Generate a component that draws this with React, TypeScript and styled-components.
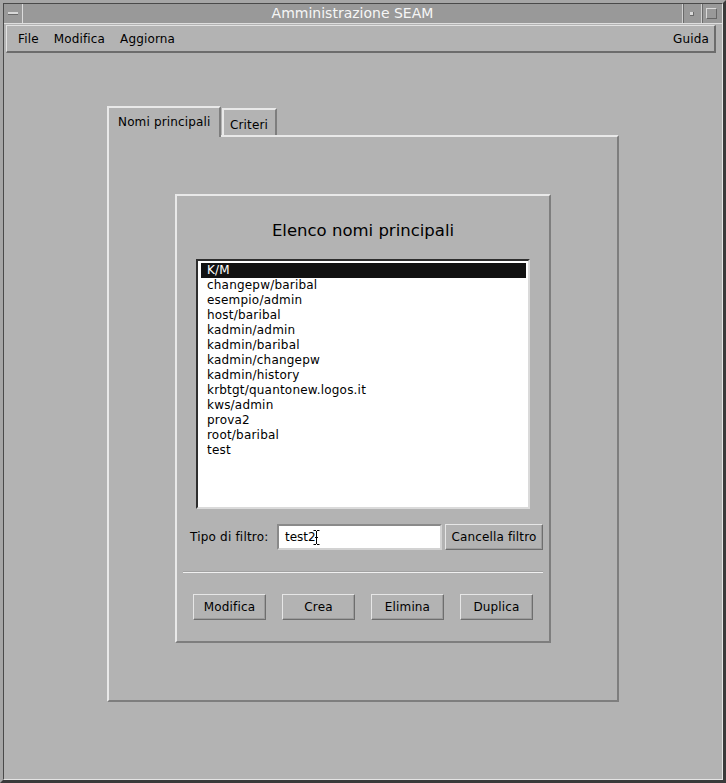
import React from "react";
import styled, { createGlobalStyle } from "styled-components";

const BG = "#b3b3b3";
const LIGHT = "#e9e9e9";
const DARK = "#7e7e7e";

const GlobalStyle = createGlobalStyle`
  html, body { margin: 0; padding: 0; background: ${BG}; }
  body {
    font-family: "DejaVu Sans", "Liberation Sans", sans-serif;
    font-size: 12px;
    color: #000;
  }
  #root { width: 726px; height: 783px; overflow: hidden; }
`;

const Window = styled.div`
  box-sizing: border-box;
  width: 726px;
  height: 783px;
  background: ${BG};
  border-style: solid;
  border-width: 3px;
  border-color: #a6a6a6 #3a3a3a #3a3a3a #a6a6a6;
  display: flex;
`;

const Frame = styled.div`
  flex: 1;
  min-width: 0;
  display: flex;
  flex-direction: column;
  border-style: solid;
  border-width: 1px;
  border-color: #4a4a4a #e4e4e4 #e4e4e4 #4a4a4a;
`;

const TitleBar = styled.div`
  height: 19px;
  display: flex;
  background: #999999;
  border-bottom: 1px solid #dedede;
`;

const WinButton = styled.div<{ $edge: "left" | "right" }>`
  width: 18px;
  display: flex;
  align-items: center;
  justify-content: center;
  ${(p) =>
    p.$edge === "left"
      ? `border-right: 1px solid #dcdcdc;`
      : `border-left: 1px solid #d0d0d0; box-shadow: inset 1px 0 0 #6a6a6a;`}
`;

const MinBar = styled.div`
  width: 10px;
  height: 2px;
  background: #d8d8d8;
  border-bottom: 1px solid #6a6a6a;
`;

const Dot = styled.div`
  width: 3px;
  height: 3px;
  background: #dadada;
  border-right: 1px solid #6a6a6a;
  border-bottom: 1px solid #6a6a6a;
`;

const MaxBox = styled.div`
  box-sizing: border-box;
  width: 11px;
  height: 11px;
  border-style: solid;
  border-width: 1px;
  border-color: #dadada #666 #666 #dadada;
`;

const Spacer = styled.div`
  width: 2px;
`;

const Title = styled.div`
  flex: 1;
  text-align: center;
  color: #f6f6f6;
  font-size: 14px;
  line-height: 19px;
`;

const Client = styled.div`
  flex: 1;
  display: flex;
  flex-direction: column;
`;

const MenuBar = styled.div`
  box-sizing: border-box;
  height: 28px;
  margin: 1px 6px 0 2px;
  display: flex;
  align-items: center;
  gap: 15px;
  padding: 0 5px 0 11px;
  border-style: solid;
  border-width: 1px 2px 2px 1px;
  border-color: #e2e2e2 #6c6c6c #6c6c6c #e2e2e2;
`;

const MenuItem = styled.span<{ $right?: boolean }>`
  font-size: 12px;
  letter-spacing: 0.15px;
  ${(p) => (p.$right ? "margin-left: auto;" : "")}
`;

const Main = styled.div`
  flex: 1;
  display: flex;
  justify-content: center;
  align-items: flex-start;
  padding-top: 53px;
`;

const TabWidget = styled.div`
  width: 512px;
  display: flex;
  flex-direction: column;
`;

const TabRow = styled.div`
  height: 29px;
  display: flex;
  align-items: flex-end;
`;

const Tab = styled.div<{ $active?: boolean }>`
  box-sizing: border-box;
  position: relative;
  z-index: 1;
  background: ${BG};
  border-style: solid;
  border-width: 2px 2px 0 2px;
  border-color: ${LIGHT} ${DARK} transparent ${LIGHT};
  font-size: 12px;
  letter-spacing: 0.15px;
  ${(p) =>
    p.$active
      ? `height: 31px; margin-bottom: -2px; padding: 7px 8px 0 9px; width: 114px;`
      : `height: 27px; padding: 8px 0 0 6px; width: 55px; margin-left: 1px;`}
`;

const Panel = styled.div`
  box-sizing: border-box;
  height: 567px;
  border-style: solid;
  border-width: 2px;
  border-color: ${LIGHT} ${DARK} ${DARK} ${LIGHT};
  display: flex;
  align-items: center;
  justify-content: center;
`;

const InnerBox = styled.div`
  box-sizing: border-box;
  width: 376px;
  height: 449px;
  border-style: solid;
  border-width: 2px;
  border-color: ${LIGHT} ${DARK} ${DARK} ${LIGHT};
  display: flex;
  flex-direction: column;
`;

const Heading = styled.div`
  margin-top: 25px;
  text-align: center;
  font-size: 16.5px;
  line-height: 20px;
`;

const List = styled.div`
  box-sizing: border-box;
  margin: 18px 19px 0 19px;
  height: 250px;
  background: #fff;
  border-style: solid;
  border-width: 2px;
  border-color: #2e2e2e #dadada #dadada #2e2e2e;
  padding: 2px 2px 0 3px;
  display: flex;
  flex-direction: column;
`;

const Row = styled.div<{ $selected?: boolean }>`
  height: 15px;
  line-height: 15px;
  padding-left: 6px;
  font-size: 12px;
  letter-spacing: 0.2px;
  white-space: nowrap;
  background: ${(p) => (p.$selected ? "#121212" : "transparent")};
  color: ${(p) => (p.$selected ? "#ffffff" : "#000")};
`;

const FilterRow = styled.div`
  margin-top: 15px;
  height: 26px;
  display: flex;
  align-items: center;
  padding: 0 6px 0 13px;
`;

const Label = styled.span`
  font-size: 12px;
  letter-spacing: 0.2px;
  width: 87px;
`;

const InputBox = styled.div`
  box-sizing: border-box;
  position: relative;
  width: 165px;
  height: 26px;
  background: #fff;
  border-style: solid;
  border-width: 2px;
  border-color: #8a8a8a #d2d2d2 #d2d2d2 #8a8a8a;
  padding-left: 6px;
  font-size: 12px;
  line-height: 22px;
`;

const IBeam = styled.svg`
  position: absolute;
  left: 34px;
  top: 4px;
`;

const Button = styled.div<{ $width: number }>`
  box-sizing: border-box;
  width: ${(p) => p.$width}px;
  height: 26px;
  display: flex;
  align-items: center;
  justify-content: center;
  font-size: 12px;
  letter-spacing: 0.15px;
  background: ${BG};
  border-style: solid;
  border-width: 1px;
  border-color: #e6e6e6 #6e6e6e #6e6e6e #e6e6e6;
  box-shadow: inset -1px -1px 0 #9c9c9c;
`;

const CancelButton = styled(Button)`
  margin-left: 3px;
`;

const Separator = styled.div`
  margin: 21px 6px 0 6px;
  height: 0;
  border-top: 1px solid #a2a2a2;
  border-bottom: 1px solid #f0f0f0;
`;

const ButtonRow = styled.div`
  margin-top: 21px;
  padding: 0 16px;
  display: flex;
  justify-content: space-between;
`;

const items = [
  "K/M",
  "changepw/baribal",
  "esempio/admin",
  "host/baribal",
  "kadmin/admin",
  "kadmin/baribal",
  "kadmin/changepw",
  "kadmin/history",
  "krbtgt/quantonew.logos.it",
  "kws/admin",
  "prova2",
  "root/baribal",
  "test",
];

export default function App() {
  return (
    <>
      <GlobalStyle />
      <Window>
        <Frame>
          <TitleBar>
            <WinButton $edge="left">
              <MinBar />
            </WinButton>
            <Title>Amministrazione SEAM</Title>
            <WinButton $edge="right">
              <Dot />
            </WinButton>
            <WinButton $edge="right">
              <MaxBox />
            </WinButton>
            <Spacer />
          </TitleBar>
          <Client>
            <MenuBar>
              <MenuItem>File</MenuItem>
              <MenuItem>Modifica</MenuItem>
              <MenuItem>Aggiorna</MenuItem>
              <MenuItem $right>Guida</MenuItem>
            </MenuBar>
            <Main>
              <TabWidget>
                <TabRow>
                  <Tab $active>Nomi principali</Tab>
                  <Tab>Criteri</Tab>
                </TabRow>
                <Panel>
                  <InnerBox>
                    <Heading>Elenco nomi principali</Heading>
                    <List>
                      {items.map((it, i) => (
                        <Row key={it} $selected={i === 0}>
                          {it}
                        </Row>
                      ))}
                    </List>
                    <FilterRow>
                      <Label>Tipo di filtro:</Label>
                      <InputBox>
                        test2
                        <IBeam width="7" height="15" viewBox="0 0 7 15">
                          <path
                            d="M0.5 0.5h2.5M4 0.5h2.5M3.5 1v13M0.5 14.5h2.5M4 14.5h2.5M2 7.5h3"
                            stroke="#000"
                            strokeWidth="1"
                            fill="none"
                          />
                        </IBeam>
                      </InputBox>
                      <CancelButton $width={98}>Cancella filtro</CancelButton>
                    </FilterRow>
                    <Separator />
                    <ButtonRow>
                      <Button $width={73}>Modifica</Button>
                      <Button $width={73}>Crea</Button>
                      <Button $width={73}>Elimina</Button>
                      <Button $width={73}>Duplica</Button>
                    </ButtonRow>
                  </InnerBox>
                </Panel>
              </TabWidget>
            </Main>
          </Client>
        </Frame>
      </Window>
    </>
  );
}
